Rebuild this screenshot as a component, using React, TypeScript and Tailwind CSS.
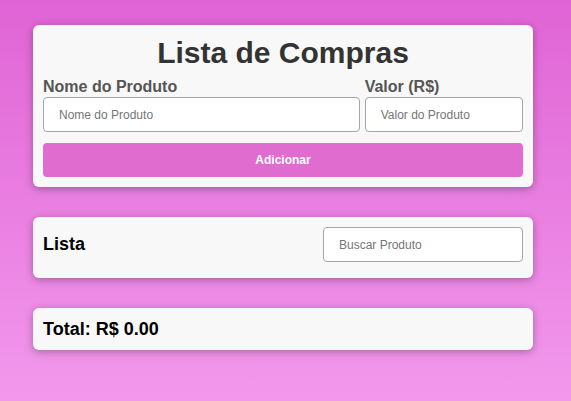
import React, { useState } from 'react';

const font = { fontFamily: '"Liberation Sans", Arial, sans-serif' };

export default function App() {
  const [nome, setNome] = useState('');
  const [valor, setValor] = useState('');
  const [busca, setBusca] = useState('');

  return (
    <div style={font} className="min-h-[401px] w-full bg-gradient-to-b from-[#df63d5] to-[#f298ec] pt-[25px] pb-[40px]">
      <div className="ml-[33px] w-[500px] space-y-[30px]">
        {/* Formulário */}
        <div className="rounded-[6px] bg-[#f8f8f8] p-[10px] shadow-[0_2px_8px_rgba(0,0,0,0.3)]">
          <h1 className="mb-[8px] text-center text-[30px] font-bold leading-[35px] text-[#333]">Lista de Compras</h1>
          <div className="flex gap-[5px]">
            <div className="flex min-w-0 flex-[2_1_0%] flex-col">
              <label className="text-[16px] font-bold leading-[18px] text-[#555]">Nome do Produto</label>
              <input
                value={nome}
                onChange={(e) => setNome(e.target.value)}
                placeholder="Nome do Produto"
                className="mt-[1px] h-[35px] w-full min-w-0 rounded-[4px] border border-[#a5a5a5] bg-white px-[15px] text-[12px] text-[#333] placeholder:text-[#757575] outline-none"
              />
            </div>
            <div className="flex min-w-0 flex-[1_1_0%] flex-col">
              <label className="text-[16px] font-bold leading-[18px] text-[#555]">Valor (R$)</label>
              <input
                value={valor}
                onChange={(e) => setValor(e.target.value)}
                placeholder="Valor do Produto"
                className="mt-[1px] h-[35px] w-full min-w-0 rounded-[4px] border border-[#a5a5a5] bg-white px-[15px] text-[12px] text-[#333] placeholder:text-[#757575] outline-none"
              />
            </div>
          </div>
          <button className="mt-[11px] h-[34px] w-full rounded-[4px] bg-[#e06ccf] text-[12px] font-bold text-white">
            Adicionar
          </button>
        </div>

        {/* Lista */}
        <div className="flex items-center justify-between rounded-[6px] bg-[#f8f8f8] px-[10px] pt-[10px] pb-[16px] shadow-[0_2px_8px_rgba(0,0,0,0.3)]">
          <h2 className="text-[18px] font-bold text-black">Lista</h2>
          <input
            value={busca}
            onChange={(e) => setBusca(e.target.value)}
            placeholder="Buscar Produto"
            className="h-[35px] w-[200px] rounded-[4px] border border-[#a5a5a5] bg-white px-[15px] text-[12px] text-[#333] placeholder:text-[#757575] outline-none"
          />
        </div>

        {/* Total */}
        <div className="rounded-[6px] bg-[#f8f8f8] px-[10px] pt-[10px] pb-[10px] shadow-[0_2px_8px_rgba(0,0,0,0.3)]">
          <h3 className="text-[18px] font-bold leading-[22px] text-black">Total: R$ 0.00</h3>
        </div>
      </div>
    </div>
  );
}
